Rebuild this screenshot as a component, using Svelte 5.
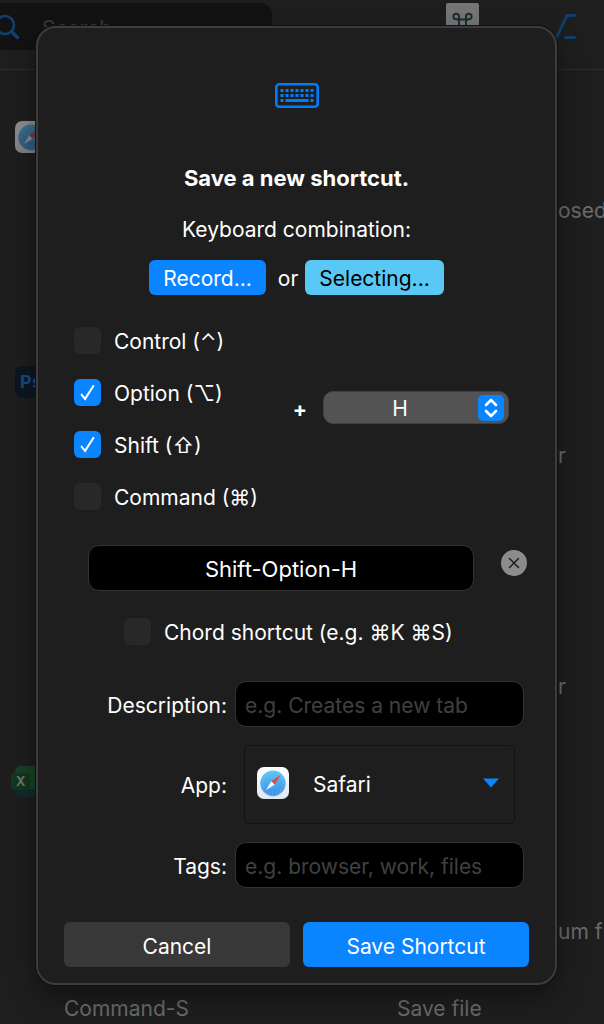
<script lang="ts">
	type Entry = { keys?: string; name?: string; align?: string };
	type Section = { app: string; entries: Entry[] };

	const sections: Section[] = [
		{ app: 'safari', entries: [{ name: 'osed' }, {}] },
		{ app: 'photoshop', entries: [{ name: 'r' }, {}, {}, { name: 'r' }] },
		{ app: 'excel', entries: [{}, { name: 'um fu' }, { keys: 'Command-S', name: 'Save file', align: 'start' }] }
	];

	const keyList = 'ABCDEFGHIJKLMNOPQRSTUVWXYZ'.split('');

	let modifiers = $state([
		{ name: 'Control', symbol: '⌃', on: false },
		{ name: 'Option', symbol: '⌥', on: true },
		{ name: 'Shift', symbol: '⇧', on: true },
		{ name: 'Command', symbol: '⌘', on: false }
	]);
	let key = $state('H');
	let chord = $state(false);
	let app = $state('Safari');
	let description = $state('');
	let tags = $state('');

	const order = ['Control', 'Shift', 'Option', 'Command'];
	let combination = $derived(
		[...order.filter((name) => modifiers.find((m) => m.name === name)?.on), key].filter(Boolean).join('-')
	);

	function clear() {
		modifiers.forEach((m) => (m.on = false));
		key = '';
	}
</script>

{#snippet safariIcon()}
	<svg class="app-icon" viewBox="0 0 32 32" aria-hidden="true">
		<defs>
			<linearGradient id="tile" x1="0" y1="0" x2="0" y2="1">
				<stop offset="0" stop-color="#ffffff" />
				<stop offset="1" stop-color="#dfe7f5" />
			</linearGradient>
			<linearGradient id="dial" x1="0" y1="0" x2="0" y2="1">
				<stop offset="0" stop-color="#5cc8f5" />
				<stop offset="1" stop-color="#3a8dea" />
			</linearGradient>
		</defs>
		<rect width="32" height="32" rx="7" fill="url(#tile)" />
		<circle cx="16" cy="17" r="12.5" fill="#a9b4c2" />
		<circle cx="16" cy="16" r="12.5" fill="url(#dial)" />
		<circle cx="16" cy="16" r="10.5" fill="none" stroke="#8fd2f8" stroke-width="1.5" stroke-dasharray="0.5 2.25" />
		<path d="M23.5 8 L14.3 14.3 L17.7 17.7 Z" fill="#ee4438" />
		<path d="M9 23 L14.3 14.3 L17.7 17.7 Z" fill="#f5f8fc" />
	</svg>
{/snippet}

<div class="window">
	<header class="toolbar">
		<label class="search">
			<svg width="20" height="28" viewBox="0 0 20 28" fill="none" stroke="#123f6d" aria-hidden="true">
				<circle cx="5" cy="12" r="9" stroke-width="2.6" />
				<path d="M11.5 18.5 L17.5 24.5" stroke-width="3.4" stroke-linecap="round" />
			</svg>
			<input type="text" placeholder="Search" aria-label="Search" />
		</label>
		<svg class="command" width="33" height="34" viewBox="0 0 33 34" aria-hidden="true">
			<rect width="33" height="34" rx="2" fill="#757575" />
			<path
				d="M13 14 V24 M20 14 V24 M10.5 16.5 H22.5 M13 16 V13.5 a2.8 2.8 0 1 0 -2.8 2.8 H13 M20 16 V13.5 a2.8 2.8 0 1 1 2.8 2.8 H20"
				fill="none"
				stroke="#1b2b31"
				stroke-width="2"
			/>
		</svg>
		<svg class="option" width="28" height="28" viewBox="0 0 28 28" aria-hidden="true">
			<path
				d="M25.5 3.5 H18 L8 24.5 M16.5 25.5 H25.5"
				fill="none"
				stroke="#123f6d"
				stroke-width="2.8"
				stroke-linecap="round"
				stroke-linejoin="round"
			/>
		</svg>
	</header>

	<main class="shortcuts">
		{#each sections as section}
			<section>
				<div class="section-head">
					{#if section.app === 'safari'}
						<div class="dimmed">{@render safariIcon()}</div>
					{:else if section.app === 'photoshop'}
						<svg class="app-icon" viewBox="0 0 32 32" aria-hidden="true">
							<rect width="32" height="32" rx="7" fill="#0d1620" />
							<text x="5" y="22" class="ps">Ps</text>
						</svg>
					{:else}
						<svg class="app-icon excel" viewBox="0 0 36 32" aria-hidden="true">
							<rect x="4" y="8" width="32" height="24" rx="7" fill="#142a2a" />
							<path d="M4 7 a6 6 0 0 1 6 -6 H36 V24 H4 Z" fill="#164226" />
							<rect y="8" width="19" height="17" rx="2" fill="#13371f" />
							<text x="5" y="21" class="xl">X</text>
						</svg>
					{/if}
				</div>
				{#each section.entries as entry}
					<div class="entry">
						<span>{entry.keys ?? ''}</span>
						<span class={entry.align ?? 'tail'}>{entry.name ?? ''}</span>
					</div>
				{/each}
			</section>
		{/each}
	</main>
</div>

<form class="dialog" role="dialog" aria-labelledby="title" onsubmit={(e) => e.preventDefault()}>
	<svg class="keyboard" width="44" height="25" viewBox="0 0 44 25" aria-hidden="true">
		<rect x="1.3" y="1.3" width="41.4" height="22.4" rx="3" fill="none" stroke="#007dff" stroke-width="2.6" />
		{#each [0, 1, 2, 3, 4, 5, 6] as col}
			<rect x={5.5 + col * 5} y="6" width="3" height="3" fill="#007dff" />
			<rect x={5.5 + col * 5} y="11" width="3" height="3" fill="#007dff" />
		{/each}
		<rect x="5.5" y="16" width="3" height="3" fill="#007dff" />
		<rect x="10.5" y="16" width="23" height="3" fill="#007dff" />
		<rect x="35.5" y="16" width="3" height="3" fill="#007dff" />
	</svg>

	<h1 id="title">Save a new shortcut.</h1>
	<p>Keyboard combination:</p>

	<div class="modes">
		<button type="button" class="record">Record...</button>
		<span>or</span>
		<button type="button" class="selecting">Selecting...</button>
	</div>

	<div class="keys">
		<div class="modifiers">
			{#each modifiers as modifier}
				<label class="check">
					<input type="checkbox" bind:checked={modifier.on} />
					<span>{modifier.name} ({modifier.symbol})</span>
				</label>
			{/each}
		</div>
		<span class="plus">+</span>
		<div class="key-select">
			<select bind:value={key} aria-label="Key">
				{#each keyList as k}
					<option>{k}</option>
				{/each}
			</select>
			<svg width="26" height="26" viewBox="0 0 26 26" aria-hidden="true">
				<rect width="26" height="26" rx="5" fill="#0a84ff" />
				<path
					d="M8 10 L13 5 L18 10 M8 16 L13 21 L18 16"
					fill="none"
					stroke="#fff"
					stroke-width="2.6"
					stroke-linecap="round"
					stroke-linejoin="round"
				/>
			</svg>
		</div>
	</div>

	<div class="result">
		<input class="field" type="text" readonly value={combination} aria-label="Combination" />
		<button type="button" class="clear" aria-label="Clear" onclick={clear}>
			<svg width="26" height="26" viewBox="0 0 26 26">
				<circle cx="13" cy="13" r="13" fill="#8c8c8c" />
				<path d="M8.5 8.5 L17.5 17.5 M17.5 8.5 L8.5 17.5" stroke="#1e1e1e" stroke-width="1.5" stroke-linecap="round" />
			</svg>
		</button>
	</div>

	<label class="check chord">
		<input type="checkbox" bind:checked={chord} />
		<span>Chord shortcut (e.g. ⌘K ⌘S)</span>
	</label>

	<div class="details">
		<label for="description">Description:</label>
		<input id="description" class="field" type="text" placeholder="e.g. Creates a new tab" bind:value={description} />

		<label for="app-name">App:</label>
		<div class="app-select">
			{@render safariIcon()}
			<select id="app-name" bind:value={app}>
				<option>Safari</option>
			</select>
			<svg class="arrow" width="18" height="10" viewBox="0 0 18 10" aria-hidden="true">
				<path d="M1 0.5 H17 L9 9.5 Z" fill="#0a84ff" />
			</svg>
		</div>

		<label for="tags">Tags:</label>
		<input id="tags" class="field" type="text" placeholder="e.g. browser, work, files" bind:value={tags} />
	</div>

	<div class="actions">
		<button type="button">Cancel</button>
		<button type="submit" class="save">Save Shortcut</button>
	</div>
</form>

<style>
	:global(body) {
		background: #1e1e1e;
		color: #fff;
		font-family: Inter, 'Liberation Sans', 'DejaVu Sans', sans-serif;
		font-size: 21px;
		line-height: 28px;
	}

	* {
		box-sizing: border-box;
	}

	button,
	input,
	select {
		font: inherit;
		color: inherit;
		margin: 0;
		border: 0;
		outline: none;
	}

	select {
		appearance: none;
		background: transparent;
	}

	.window {
		height: 100vh;
		overflow: hidden;
		color: #6b6b6b;
	}

	.toolbar {
		display: flex;
		align-items: flex-start;
		height: 70px;
		padding-top: 3px;
		border-bottom: 1px solid #2c2c2c;
	}

	.search {
		display: flex;
		align-items: center;
		gap: 22px;
		width: 45%;
		height: 47px;
		margin-right: auto;
		background: #121212;
		border-radius: 0 12px 12px 0;
	}

	.search input {
		min-width: 0;
		flex: 1;
		padding: 4px 0 0;
		background: transparent;
	}

	.search input::placeholder {
		color: #3a3a3a;
	}

	.option {
		margin: 9px 27px 0 70px;
	}

	.shortcuts {
		padding-top: 32px;
	}

	section {
		margin-bottom: 21px;
	}

	.section-head {
		display: flex;
		align-items: center;
		height: 70px;
		padding-left: 15px;
	}

	.app-icon {
		display: block;
		flex: none;
		width: 32px;
		height: 32px;
	}

	.excel {
		width: 36px;
		margin-left: -4px;
	}

	.dimmed {
		opacity: 0.5;
	}

	.ps {
		font-size: 18px;
		font-weight: 700;
		fill: #144a7c;
	}

	.xl {
		font-size: 13px;
		font-weight: 600;
		fill: #777;
	}

	.entry {
		display: flex;
		align-items: center;
		justify-content: space-between;
		height: 77px;
		padding-left: 64px;
		white-space: nowrap;
	}

	.tail {
		width: 46px;
	}

	.start {
		width: 207px;
	}

	.dialog {
		position: absolute;
		top: 26px;
		left: 36px;
		right: 47px;
		padding: 55px 26px 16px;
		background: #1e1e1e;
		border: 2px solid #3c3c3c;
		border-radius: 20px;
		box-shadow:
			0 0 0 1px #111,
			0 12px 28px rgba(0, 0, 0, 0.4);
	}

	.keyboard {
		display: block;
		margin: 0 auto;
	}

	h1,
	p {
		margin: 0;
		text-align: center;
	}

	h1 {
		margin-top: 56px;
		font-size: 22px;
		font-weight: 700;
	}

	p {
		margin-top: 24px;
		font-size: 21px;
	}

	.modes {
		display: flex;
		justify-content: center;
		align-items: center;
		margin-top: 16px;
	}

	.modes span {
		padding: 2px 7px 0 12px;
	}

	.modes button {
		height: 35px;
		padding: 2px 14px 0;
		border-radius: 6px;
	}

	.record {
		background: #0a84ff;
	}

	.selecting {
		background: #5ac8f5;
		color: #000;
	}

	.keys {
		display: flex;
		align-items: center;
		margin-top: 32px;
		padding: 0 20px 0 10px;
	}

	.modifiers {
		display: flex;
		flex-direction: column;
		gap: 25px;
		flex: 1;
	}

	.check {
		display: flex;
		align-items: center;
		gap: 13px;
		height: 27px;
	}

	.check span {
		padding-top: 3px;
	}

	.check input {
		appearance: none;
		display: grid;
		place-items: center;
		flex: none;
		width: 27px;
		height: 27px;
		background: #282828;
		border-radius: 6px;
	}

	.check input:checked {
		background: #0a84ff;
	}

	.check input:checked::after {
		content: '';
		width: 5px;
		height: 15px;
		border: solid #fff;
		border-width: 0 2px 2px 0;
		transform: rotate(33deg) skewY(16deg);
		margin-bottom: 4px;
	}

	.plus {
		padding: 0 16px;
		margin-bottom: 18px;
		font-weight: 700;
	}

	.key-select {
		position: relative;
		width: 186px;
		height: 33px;
		margin-bottom: 22px;
	}

	.key-select select {
		width: 100%;
		height: 33px;
		padding: 3px 32px 0 0;
		background: #535353;
		border: 1px solid #414141;
		border-radius: 10px;
		text-align-last: center;
	}

	.key-select svg {
		position: absolute;
		top: 4px;
		right: 5px;
		pointer-events: none;
	}

	.result {
		display: flex;
		align-items: flex-start;
		margin-top: 35px;
		padding: 0 2px 0 24px;
	}

	.field {
		min-width: 0;
		height: 46px;
		padding: 2px 9px 0;
		background: #000;
		border: 1px solid #333;
		border-radius: 11px;
	}

	.field::placeholder {
		color: #404040;
	}

	.result .field {
		flex: 1;
		font-size: 22px;
		text-align: center;
	}

	.clear {
		margin: 5px 0 0 27px;
		padding: 0;
		background: none;
	}

	.clear svg {
		display: block;
	}

	.chord {
		margin: 27px 0 0 60px;
	}

	.details {
		display: grid;
		grid-template-columns: 163px 1fr;
		align-items: center;
		gap: 18px 8px;
		margin-top: 36px;
		padding-right: 5px;
	}

	.details label {
		padding-top: 3px;
		text-align: right;
	}

	.app-select {
		position: relative;
		display: flex;
		align-items: center;
		height: 79px;
		margin: 0 9px;
		padding: 0 12px 4px;
		border: 1px solid #121212;
		border-radius: 5px;
	}

	.app-select select {
		flex: 1;
		padding: 4px 24px 0;
	}

	.arrow {
		margin-right: 2px;
		pointer-events: none;
	}

	.actions {
		display: grid;
		grid-template-columns: 1fr 1fr;
		gap: 13px;
		margin-top: 34px;
	}

	.actions button {
		height: 45px;
		padding: 4px 0 0;
		background: #383838;
		border-radius: 6px;
	}

	.actions .save {
		background: #0a84ff;
	}
</style>
